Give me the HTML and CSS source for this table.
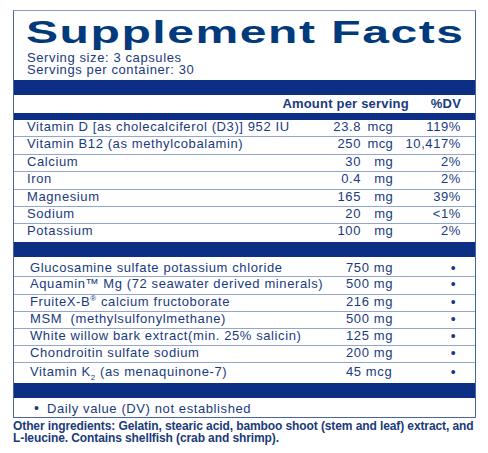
FILE: index.html
```html
<!DOCTYPE html>
<html>
<head lang="en">
    <meta charset="UTF-8">
    <title>Supplement Facts</title>
    <link rel="stylesheet" href="styles.css">
</head>
<body>
    <section class="label">
        <h1 class="title"><span>Supplement Facts</span></h1>
        <div class="serving">
            <p>Serving size: 3 capsules</p>
            <p>Servings per container: 30</p>
        </div>
        <div class="bar bar-lg"></div>
        <div class="head">
            <span class="head-amt">Amount per serving</span>
            <span class="head-dv">%DV</span>
        </div>
        <div class="bar bar-sm"></div>
        <ul class="rows">
            <li class="row"><span>Vitamin D [as cholecalciferol (D3)] 952 IU</span><span class="num">23.8</span><span class="unit">mcg</span><span class="dv">119%</span></li>
            <li class="row"><span>Vitamin B12 (as methylcobalamin)</span><span class="num">250</span><span class="unit">mcg</span><span class="dv">10,417%</span></li>
            <li class="row"><span>Calcium</span><span class="num">30</span><span class="unit">mg</span><span class="dv">2%</span></li>
            <li class="row"><span>Iron</span><span class="num">0.4</span><span class="unit">mg</span><span class="dv">2%</span></li>
            <li class="row"><span>Magnesium</span><span class="num">165</span><span class="unit">mg</span><span class="dv">39%</span></li>
            <li class="row"><span>Sodium</span><span class="num">20</span><span class="unit">mg</span><span class="dv">&lt;1%</span></li>
            <li class="row"><span>Potassium</span><span class="num">100</span><span class="unit">mg</span><span class="dv">2%</span></li>
        </ul>
        <div class="bar bar-lg"></div>
        <ul class="rows rows-other">
            <li class="orow"><span>Glucosamine sulfate potassium chloride</span><span>750 mg</span><span class="dot">&bull;</span></li>
            <li class="orow"><span>Aquamin&trade; Mg (72 seawater derived minerals)</span><span>500 mg</span><span class="dot">&bull;</span></li>
            <li class="orow"><span>FruiteX-B<sup>&reg;</sup> calcium fructoborate</span><span>216 mg</span><span class="dot">&bull;</span></li>
            <li class="orow"><span>MSM&nbsp; (methylsulfonylmethane)</span><span>500 mg</span><span class="dot">&bull;</span></li>
            <li class="orow"><span>White willow bark extract(min. 25% salicin)</span><span>125 mg</span><span class="dot">&bull;</span></li>
            <li class="orow"><span>Chondroitin sulfate sodium</span><span>200 mg</span><span class="dot">&bull;</span></li>
            <li class="orow"><span>Vitamin K<sub>2</sub> (as menaquinone-7)</span><span>45 mcg</span><span class="dot">&bull;</span></li>
        </ul>
        <div class="bar bar-lg"></div>
        <p class="note"><span class="note-dot">&bull;</span>Daily value (DV) not established</p>
    </section>
    <p class="other">Other ingredients: Gelatin, stearic acid, bamboo shoot (stem and leaf) extract, and <span class="nowrap">L-leucine.</span> Contains shellfish (crab and shrimp).</p>
</body>
</html>
```

FILE: styles.css
```css
body{
    margin: 0;
    font-family: "Liberation Sans", Arial, sans-serif;
    font-size: 13px;
    letter-spacing: 0.6px;
    color: #1a3a7e;
}
p, h1, ul{
    margin: 0;
    padding: 0;
}
ul{
    list-style-type: none;
}
.nowrap{
    white-space: nowrap;
}
.label{
    margin: 10px 0 0 13px;
    width: 463px;
    box-sizing: border-box;
    border: 1px solid #4a64a3;
    border-top-color: #8c9cc9;
}
.title{
    height: 34px;
    padding: 5px 0 0 12px;
    line-height: 34px;
    font-size: 31px;
    font-weight: bold;
    color: #023a7c;
    white-space: nowrap;
}
.title span{
    display: inline-block;
    letter-spacing: 1px;
    transform: scaleX(1.55);
    transform-origin: left center;
}
.serving{
    margin: 2px 0 4px;
    padding-left: 13px;
    line-height: 12px;
}
.bar{
    background-color: #0c2e84;
}
.bar-lg{
    height: 15px;
}
.bar-sm{
    height: 7px;
}
.head{
    display: flex;
    justify-content: flex-end;
    gap: 22px;
    height: 18px;
    padding-right: 14px;
    line-height: 18px;
    font-weight: bold;
    letter-spacing: 0.2px;
}
.row{
    display: grid;
    grid-template-columns: 1fr 40px 32px 68px;
    box-sizing: border-box;
    height: 17.4px;
    padding: 0 14px 3px 13px;
    line-height: 14.4px;
    border-bottom: 1px solid #93a6d0;
    white-space: nowrap;
}
.row:last-child{
    border-bottom: none;
}
.num, .unit, .dv{
    text-align: right;
}
.unit{
    letter-spacing: 0.3px;
}
.orow{
    display: grid;
    grid-template-columns: 1fr 100px 15px;
    box-sizing: border-box;
    height: 17.1px;
    padding: 0 14px 3px 16px;
    line-height: 14.1px;
    border-bottom: 1px solid #93a6d0;
    white-space: nowrap;
}
.orow:first-child{
    height: 20.7px;
    padding-top: 4px;
}
.orow:last-child{
    height: 19.7px;
    padding-top: 2px;
    border-bottom: none;
}
.dot{
    text-align: center;
    font-size: 14px;
}
sup, sub{
    font-size: 8px;
    line-height: 0;
}
.note{
    height: 19px;
    padding-left: 20px;
    line-height: 20px;
}
.note-dot{
    display: inline-block;
    width: 13px;
    font-size: 14px;
}
.other{
    margin: 2px 0 0 13px;
    width: 472px;
    line-height: 12.5px;
    font-family: "Liberation Sans Narrow", "Liberation Sans", Arial, sans-serif;
    font-size: 12px;
    font-weight: bold;
    letter-spacing: -0.1px;
    color: #1a3a7a;
}
```
